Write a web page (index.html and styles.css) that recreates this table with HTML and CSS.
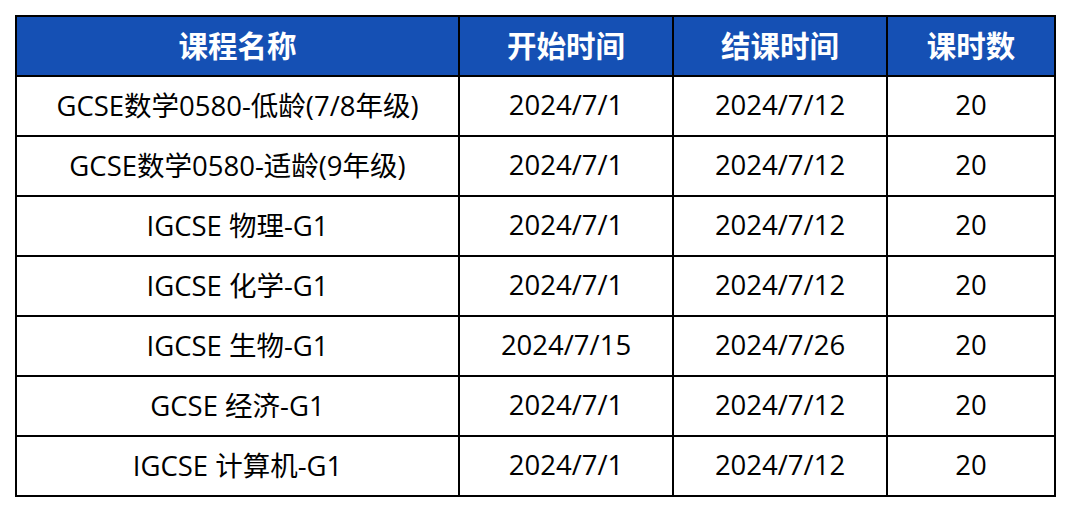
FILE: index.html
```html
<!DOCTYPE html>
<html lang="zh">
<head>
<meta charset="utf-8">
<link rel="stylesheet" href="styles.css">
</head>
<body>
<table class="schedule">
  <colgroup>
    <col class="c-name"><col class="c-date"><col class="c-date"><col class="c-hours">
  </colgroup>
  <thead>
    <tr><th>课程名称</th><th>开始时间</th><th>结课时间</th><th>课时数</th></tr>
  </thead>
  <tbody>
    <tr><td>GCSE数学0580-低龄(7/8年级)</td><td>2024/7/1</td><td>2024/7/12</td><td>20</td></tr>
    <tr><td>GCSE数学0580-适龄(9年级)</td><td>2024/7/1</td><td>2024/7/12</td><td>20</td></tr>
    <tr><td>IGCSE 物理-G1</td><td>2024/7/1</td><td>2024/7/12</td><td>20</td></tr>
    <tr><td>IGCSE 化学-G1</td><td>2024/7/1</td><td>2024/7/12</td><td>20</td></tr>
    <tr><td>IGCSE 生物-G1</td><td>2024/7/15</td><td>2024/7/26</td><td>20</td></tr>
    <tr><td>GCSE 经济-G1</td><td>2024/7/1</td><td>2024/7/12</td><td>20</td></tr>
    <tr><td>IGCSE 计算机-G1</td><td>2024/7/1</td><td>2024/7/12</td><td>20</td></tr>
  </tbody>
</table>
</body>
</html>
```

FILE: styles.css
```css
html, body {
  margin: 0;
  background: #ffffff;
}
body {
  padding: 15px;
  font-family: "Open Sans", "Noto Sans CJK SC", sans-serif;
}
.schedule {
  border-collapse: collapse;
  width: 1039px;
  table-layout: fixed;
}
.c-name { width: 443px; }
.c-date { width: 214px; }
.c-hours { width: 168px; }
.schedule th, .schedule td {
  border: 2px solid #000;
  height: 54px;
  padding: 0 0 4px 0;
  text-align: center;
  vertical-align: middle;
  font-size: 27.5px;
  font-weight: 400;
  color: #000;
  white-space: nowrap;
}
.schedule th {
  background: #1550b4;
  color: #fff;
  font-weight: 700;
  font-size: 29.5px;
}
```
